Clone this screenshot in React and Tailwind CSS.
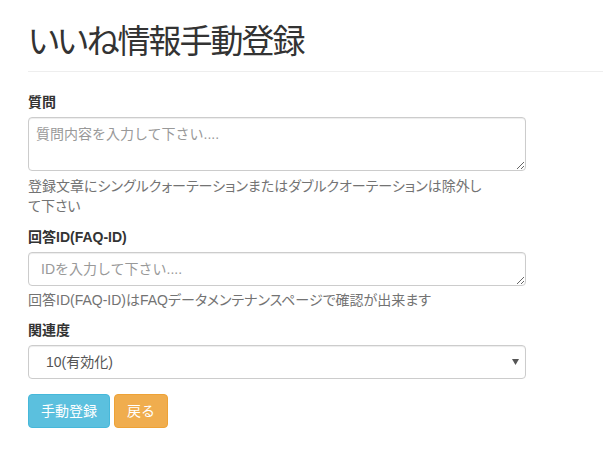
import React, { useState } from 'react';

const font = "font-['Liberation_Sans','Noto_Sans_CJK_JP',sans-serif]";

function App() {
    const [question, setQuestion] = useState('');
    const [faqId, setFaqId] = useState('');
    const [relevance, setRelevance] = useState('10');

    return (
        <div className={`${font} min-h-[452px] bg-white pl-[28px] text-[14px] leading-[20px] text-[#333]`}>
            <div className="mt-[22px] mb-[20px] border-b border-[#eee] pb-[9px]">
                <h1 className="text-[33px] leading-[40px] font-normal [font-feature-settings:'palt'] tracking-[-2px]">
                    いいね情報手動登録
                </h1>
            </div>

            <form className="w-[498px]" onSubmit={e => e.preventDefault()}>
                <label className="mb-[5px] block font-bold">質問</label>
                <textarea
                    rows={2}
                    value={question}
                    onChange={e => setQuestion(e.target.value)}
                    placeholder="質問内容を入力して下さい...."
                    className="block h-[54px] w-full rounded-[4px] border border-[#ccc] px-[7px] py-[6px] shadow-[inset_0_1px_1px_rgba(0,0,0,0.075)] outline-none placeholder:text-[#999]"
                />
                <p className="mt-[5px] mb-[10px] text-[#737373] [font-feature-settings:'palt']">
                    登録文章にシングルクォーテーションまたはダブルクオーテーションは除外し<br />て下さい
                </p>

                <label className="mb-[5px] block pt-[1px] font-bold">回答ID(FAQ-ID)</label>
                <textarea
                    rows={1}
                    value={faqId}
                    onChange={e => setFaqId(e.target.value)}
                    placeholder="IDを入力して下さい...."
                    className="block h-[34px] w-full rounded-[4px] border border-[#ccc] px-[12px] py-[6px] shadow-[inset_0_1px_1px_rgba(0,0,0,0.075)] outline-none placeholder:text-[#999]"
                />
                <p className="mt-[4px] mb-[10px] text-[#737373] [font-feature-settings:'palt']">
                    回答ID(FAQ-ID)はFAQデータメンテナンスページで確認が出来ます
                </p>

                <label className="mb-[5px] block font-bold">関連度</label>
                <div className="relative">
                    <select
                        value={relevance}
                        onChange={e => setRelevance(e.target.value)}
                        className="block h-[34px] w-full appearance-none rounded-[4px] border border-[#ccc] bg-white pl-[17px] pr-[30px] text-[#555] shadow-[inset_0_1px_1px_rgba(0,0,0,0.075)] outline-none"
                    >
                        <option value="10">10(有効化)</option>
                        <option value="0">0(無効化)</option>
                    </select>
                    <svg className="pointer-events-none absolute right-[7px] top-[14px]" width="7" height="6" viewBox="0 0 7 6">
                        <path d="M0 0h7L3.5 6z" fill="#555" />
                    </svg>
                </div>

                <div className="mt-[15px] flex gap-[4px]">
                    <button type="submit" className="h-[34px] rounded-[4px] border border-[#46b8da] bg-[#5bc0de] px-[12px] text-white">
                        手動登録
                    </button>
                    <button type="button" className="h-[34px] rounded-[4px] border border-[#eea236] bg-[#f0ad4e] px-[12px] text-white">
                        戻る
                    </button>
                </div>
            </form>
        </div>
    );
}

export default App;
